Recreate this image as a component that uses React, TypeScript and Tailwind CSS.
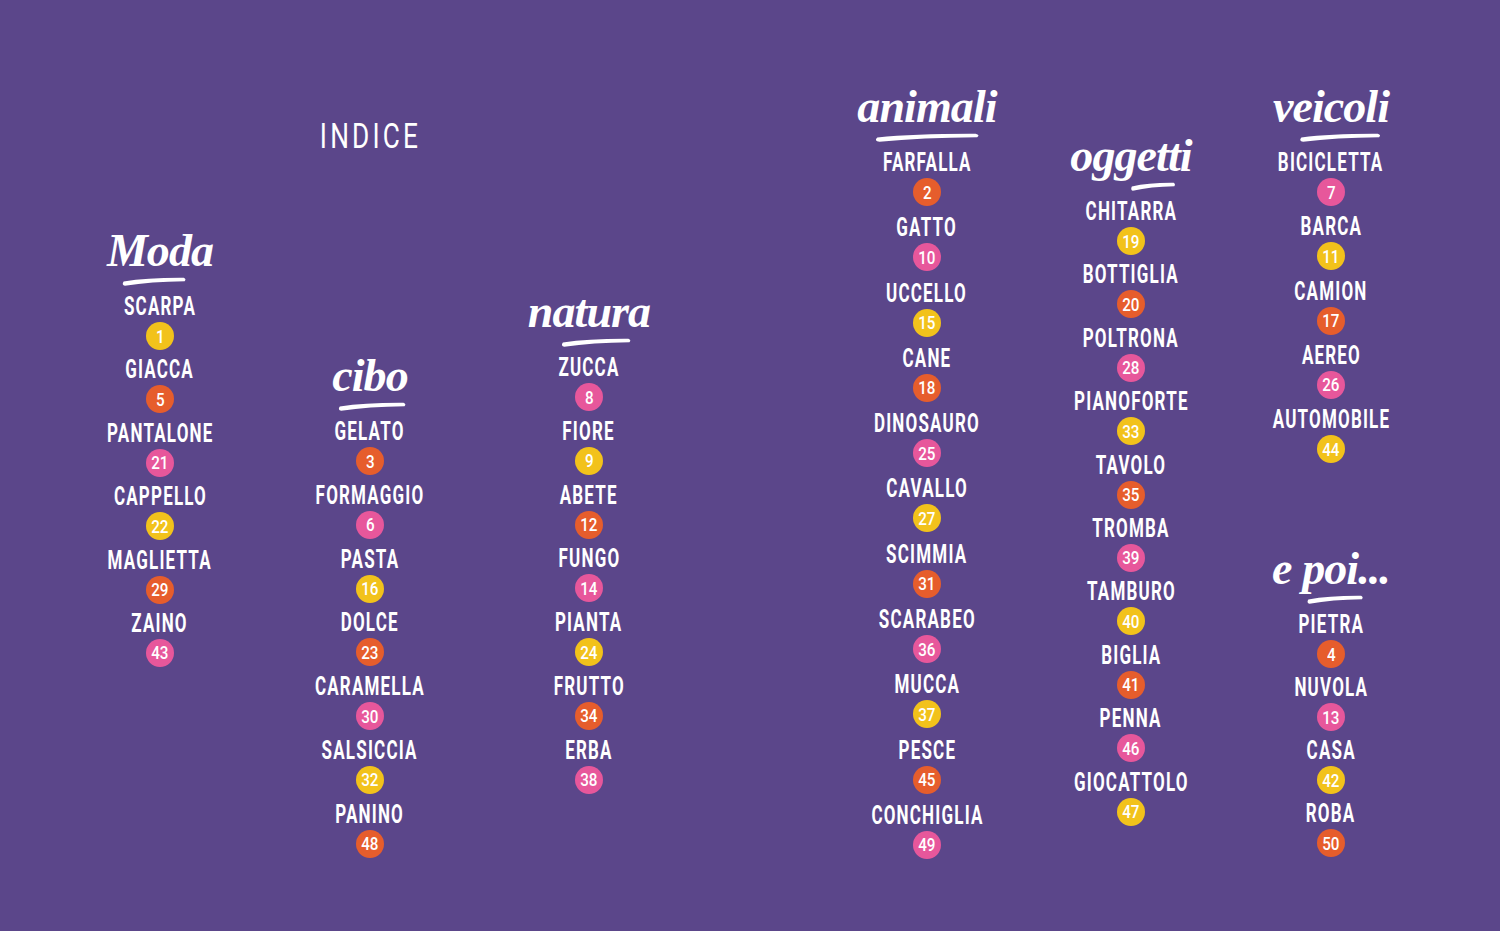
import React from "react";

type Entry = [string, number, "y" | "o" | "p"];

const dot: Record<string, string> = {
  y: "bg-[#f2c21b]",
  o: "bg-[#e65d2c]",
  p: "bg-[#e7579b]",
};

const moda: Entry[] = [
  ["SCARPA", 1, "y"],
  ["GIACCA", 5, "o"],
  ["PANTALONE", 21, "p"],
  ["CAPPELLO", 22, "y"],
  ["MAGLIETTA", 29, "o"],
  ["ZAINO", 43, "p"],
];

const cibo: Entry[] = [
  ["GELATO", 3, "o"],
  ["FORMAGGIO", 6, "p"],
  ["PASTA", 16, "y"],
  ["DOLCE", 23, "o"],
  ["CARAMELLA", 30, "p"],
  ["SALSICCIA", 32, "y"],
  ["PANINO", 48, "o"],
];

const natura: Entry[] = [
  ["ZUCCA", 8, "p"],
  ["FIORE", 9, "y"],
  ["ABETE", 12, "o"],
  ["FUNGO", 14, "p"],
  ["PIANTA", 24, "y"],
  ["FRUTTO", 34, "o"],
  ["ERBA", 38, "p"],
];

const animali: Entry[] = [
  ["FARFALLA", 2, "o"],
  ["GATTO", 10, "p"],
  ["UCCELLO", 15, "y"],
  ["CANE", 18, "o"],
  ["DINOSAURO", 25, "p"],
  ["CAVALLO", 27, "y"],
  ["SCIMMIA", 31, "o"],
  ["SCARABEO", 36, "p"],
  ["MUCCA", 37, "y"],
  ["PESCE", 45, "o"],
  ["CONCHIGLIA", 49, "p"],
];

const oggetti: Entry[] = [
  ["CHITARRA", 19, "y"],
  ["BOTTIGLIA", 20, "o"],
  ["POLTRONA", 28, "p"],
  ["PIANOFORTE", 33, "y"],
  ["TAVOLO", 35, "o"],
  ["TROMBA", 39, "p"],
  ["TAMBURO", 40, "y"],
  ["BIGLIA", 41, "o"],
  ["PENNA", 46, "p"],
  ["GIOCATTOLO", 47, "y"],
];

const veicoli: Entry[] = [
  ["BICICLETTA", 7, "p"],
  ["BARCA", 11, "y"],
  ["CAMION", 17, "o"],
  ["AEREO", 26, "p"],
  ["AUTOMOBILE", 44, "y"],
];

const epoi: Entry[] = [
  ["PIETRA", 4, "o"],
  ["NUVOLA", 13, "p"],
  ["CASA", 42, "y"],
  ["ROBA", 50, "o"],
];

const letter = { fontFamily: 'Roboto, "Liberation Sans", sans-serif' };

const script = { fontFamily: '"Liberation Serif", "DejaVu Serif", serif' };

// brush stroke under each script title; shift moves it off-centre like the hand lettering
function Heading({
  title,
  width,
  shift,
}: {
  title: string;
  width: number;
  shift: string;
}) {
  return (
    <div className="flex h-[70px] flex-col items-center justify-end pb-[6px]">
      <span
        className="text-[46px] font-bold italic leading-[46px] tracking-[-0.02em] text-white"
        style={script}
      >
        {title}
      </span>
      <svg
        width={width}
        height="9"
        viewBox="0 0 100 9"
        preserveAspectRatio="none"
        className={`mt-[3px] ${shift}`}
      >
        <path
          d="M4 4.5 Q40 0.6 95 0.8 Q99.5 2 96.5 4.2 Q45 4.6 6 8.8 Q0.5 8 4 4.5 Z"
          fill="white"
        />
      </svg>
    </div>
  );
}

function Items({ list, step }: { list: Entry[]; step: string }) {
  return (
    <ul className={`flex flex-col items-center ${step}`}>
      {list.map(([word, n, c]) => (
        <li key={word} className="flex flex-col items-center">
          <span
            className="h-[30px] scale-x-[0.68] whitespace-nowrap text-[25px] font-bold leading-[30px] tracking-[0.07em] text-white"
            style={letter}
          >
            {word}
          </span>
          <span
            className={`flex h-[28px] w-[28px] items-center justify-center rounded-full text-white ${dot[c]}`}
          >
            <span
              className="scale-x-[0.8] text-[19px] font-medium leading-none"
              style={letter}
            >
              {n}
            </span>
          </span>
        </li>
      ))}
    </ul>
  );
}

export default function App() {
  return (
    <div className="flex h-[931px] w-full overflow-hidden bg-[#5b468a] pl-[70px]">
      {/* moda */}
      <div className="flex w-[180px] flex-col items-center pt-[222px]">
        <Heading title="Moda" width={66} shift="-translate-x-[6px]" />
        <Items list={moda} step="gap-[5.4px]" />
      </div>

      {/* indice + cibo */}
      <div className="ml-[30px] flex w-[180px] flex-col items-center pt-[117px]">
        <h1
          className="h-[40px] scale-x-[0.75] text-[35px] font-normal leading-[40px] tracking-[0.12em] text-white"
          style={letter}
        >
          INDICE
        </h1>
        <div className="mt-[190px]">
          <Heading title="cibo" width={70} shift="translate-x-[2px]" />
        </div>
        <Items list={cibo} step="gap-[5.8px]" />
      </div>

      {/* natura */}
      <div className="ml-[39px] flex w-[180px] flex-col items-center pt-[283px]">
        <Heading title="natura" width={72} shift="translate-x-[7px]" />
        <Items list={natura} step="gap-[5.8px]" />
      </div>

      {/* animali */}
      <div className="ml-[158px] flex w-[180px] flex-col items-center pt-[78px]">
        <Heading title="animali" width={108} shift="translate-x-[0px]" />
        <Items list={animali} step="gap-[7.3px]" />
      </div>

      {/* oggetti */}
      <div className="ml-[24px] flex w-[180px] flex-col items-center pt-[127px]">
        <Heading title="oggetti" width={46} shift="translate-x-[22px]" />
        <Items list={oggetti} step="gap-[5.4px]" />
      </div>

      {/* veicoli + e poi */}
      <div className="ml-[20px] flex w-[180px] flex-col items-center pt-[78px]">
        <Heading title="veicoli" width={84} shift="translate-x-[9px]" />
        <Items list={veicoli} step="gap-[6.25px]" />
        <div className="mt-[77px]">
          <Heading title="e poi..." width={58} shift="translate-x-[4px]" />
        </div>
        <Items list={epoi} step="gap-[5px]" />
      </div>
    </div>
  );
}
